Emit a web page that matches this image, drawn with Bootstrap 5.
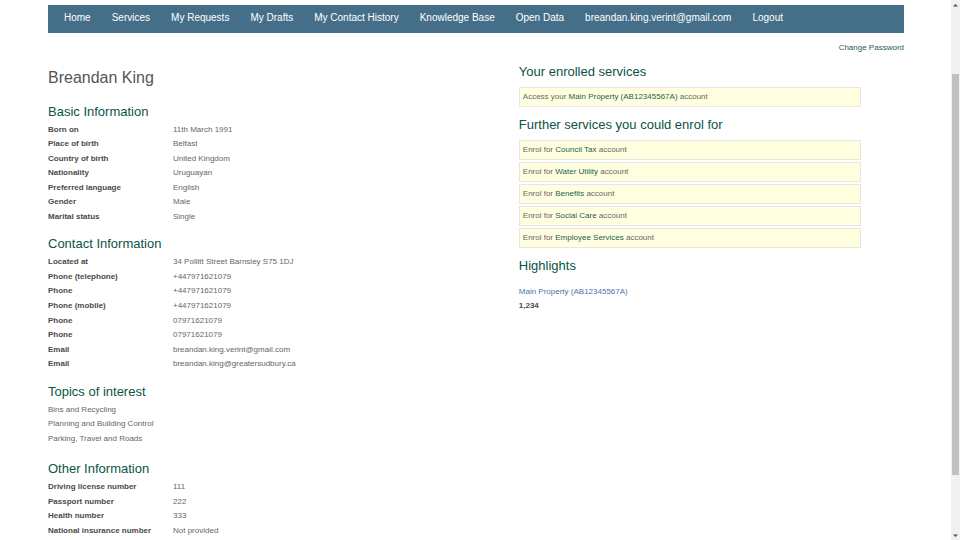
<!DOCTYPE html>
<html lang="en">
<head>
<meta charset="utf-8">
<meta name="viewport" content="width=device-width, initial-scale=1">
<title>My profile</title>
<link href="https://cdn.jsdelivr.net/npm/bootstrap@5.3.0/dist/css/bootstrap.min.css" rel="stylesheet">
<style>
  body { font-family: "Liberation Sans", Arial, sans-serif; font-size: 8px; line-height: 1.82; color: #666; background: #fff; }
  a { color: #1a5f4c; text-decoration: none; }
  a:hover { text-decoration: underline; }
  .page-body { padding: 5px 47px 0 48px; min-width: 0; }
  .site-nav { --bs-navbar-nav-link-padding-x: 10px; background: #456f88; padding: 0 6px; min-height: 28px; }
  .site-nav .navbar-nav { gap: 1px; }
  .site-nav .nav-link { color: #fff; font-size: 10px; line-height: 14px; padding-top: 6px; padding-bottom: 6px; }
  .account-links { padding-top: 8px; }
  h1 { font-size: 16px; line-height: 20px; color: #555; font-weight: 400; margin: 0; padding: 12px 0 16px; }
  h2 { font-size: 13px; line-height: 16px; color: #0b5444; font-weight: 400; margin: 0; }
  .details-col { width: 55%; }
  .services-col { width: 40%; padding-top: 8px; }
  .facts { display: grid; grid-template-columns: 125px 1fr; margin: 3px 0 12px; }
  .facts dt { color: #4a4a4a; font-weight: 700; }
  .facts dd { margin: 0; }
  .topics { margin: 3px 0 15px; }
  .offers { display: grid; gap: 2px; margin: 7px 0 10px; }
  .offer { background: #ffffe0; border: 1px solid #e6e6e6; line-height: 14px; padding: 2px 3px; }
  .highlight { margin-top: 11px; }
  .highlight a { color: #4a77a8; }
  .highlight strong { color: #4a4a4a; }
  .scroll-rail { width: 9px; background: #f1f1f1; padding: 3px 1px 2px; }
  .scroll-rail svg { width: 5px; height: 4px; }
  .rail-before { flex: 67; }
  .rail-thumb { flex: 401; background: #c1c1c1; align-self: stretch; }
  .rail-after { flex: 59; }
</style>
</head>
<body>
<div class="d-flex vh-100 overflow-hidden">
  <div class="page-body flex-grow-1 overflow-hidden">
    <nav class="site-nav navbar navbar-expand align-items-start" aria-label="Main">
      <ul class="navbar-nav">
        <li class="nav-item"><a class="nav-link" href="#">Home</a></li>
        <li class="nav-item"><a class="nav-link" href="#">Services</a></li>
        <li class="nav-item"><a class="nav-link" href="#">My Requests</a></li>
        <li class="nav-item"><a class="nav-link" href="#">My Drafts</a></li>
        <li class="nav-item"><a class="nav-link" href="#">My Contact History</a></li>
        <li class="nav-item"><a class="nav-link" href="#">Knowledge Base</a></li>
        <li class="nav-item"><a class="nav-link" href="#">Open Data</a></li>
        <li class="nav-item"><a class="nav-link" href="#">breandan.king.verint@gmail.com</a></li>
        <li class="nav-item"><a class="nav-link" href="#">Logout</a></li>
      </ul>
    </nav>
    <div class="account-links text-end"><a href="#">Change Password</a></div>
    <main class="d-flex align-items-start">
      <div class="details-col">
        <h1>Breandan King</h1>
        <section>
          <h2>Basic Information</h2>
          <dl class="facts">
            <dt>Born on</dt><dd>11th March 1991</dd>
            <dt>Place of birth</dt><dd>Belfast</dd>
            <dt>Country of birth</dt><dd>United Kingdom</dd>
            <dt>Nationality</dt><dd>Uruguayan</dd>
            <dt>Preferred language</dt><dd>English</dd>
            <dt>Gender</dt><dd>Male</dd>
            <dt>Marital status</dt><dd>Single</dd>
          </dl>
        </section>
        <section>
          <h2>Contact Information</h2>
          <dl class="facts">
            <dt>Located at</dt><dd>34 Pollitt Street Barnsley S75 1DJ</dd>
            <dt>Phone (telephone)</dt><dd>+447971621079</dd>
            <dt>Phone</dt><dd>+447971621079</dd>
            <dt>Phone (mobile)</dt><dd>+447971621079</dd>
            <dt>Phone</dt><dd>07971621079</dd>
            <dt>Phone</dt><dd>07971621079</dd>
            <dt>Email</dt><dd>breandan.king.verint@gmail.com</dd>
            <dt>Email</dt><dd>breandan.king@greatersudbury.ca</dd>
          </dl>
        </section>
        <section>
          <h2>Topics of interest</h2>
          <ul class="topics list-unstyled">
            <li>Bins and Recycling</li>
            <li>Planning and Building Control</li>
            <li>Parking, Travel and Roads</li>
          </ul>
        </section>
        <section>
          <h2>Other Information</h2>
          <dl class="facts">
            <dt>Driving license number</dt><dd>111</dd>
            <dt>Passport number</dt><dd>222</dd>
            <dt>Health number</dt><dd>333</dd>
            <dt>National insurance number</dt><dd>Not provided</dd>
          </dl>
        </section>
      </div>
      <div class="services-col">
        <section>
          <h2>Your enrolled services</h2>
          <ul class="offers list-unstyled">
            <li class="offer">Access your <a href="#">Main Property (AB12345567A)</a> account</li>
          </ul>
        </section>
        <section>
          <h2>Further services you could enrol for</h2>
          <ul class="offers list-unstyled">
            <li class="offer">Enrol for <a href="#">Council Tax</a> account</li>
            <li class="offer">Enrol for <a href="#">Water Utility</a> account</li>
            <li class="offer">Enrol for <a href="#">Benefits</a> account</li>
            <li class="offer">Enrol for <a href="#">Social Care</a> account</li>
            <li class="offer">Enrol for <a href="#">Employee Services</a> account</li>
          </ul>
        </section>
        <section>
          <h2>Highlights</h2>
          <div class="highlight">
            <a class="d-block" href="#">Main Property (AB12345567A)</a>
            <strong class="d-block">1,234</strong>
          </div>
        </section>
      </div>
    </main>
  </div>
  <div class="scroll-rail d-flex flex-column align-items-center flex-shrink-0" aria-hidden="true">
    <svg viewBox="0 0 5 4"><path d="M0 3.5 2.5 1 5 3.5z" fill="#505050"/></svg>
    <div class="rail-before"></div>
    <div class="rail-thumb"></div>
    <div class="rail-after"></div>
    <svg viewBox="0 0 5 4"><path d="M0 .5 2.5 3 5 .5z" fill="#505050"/></svg>
  </div>
</div>
<script src="https://cdn.jsdelivr.net/npm/bootstrap@5.3.0/dist/js/bootstrap.bundle.min.js"></script>
</body>
</html>
